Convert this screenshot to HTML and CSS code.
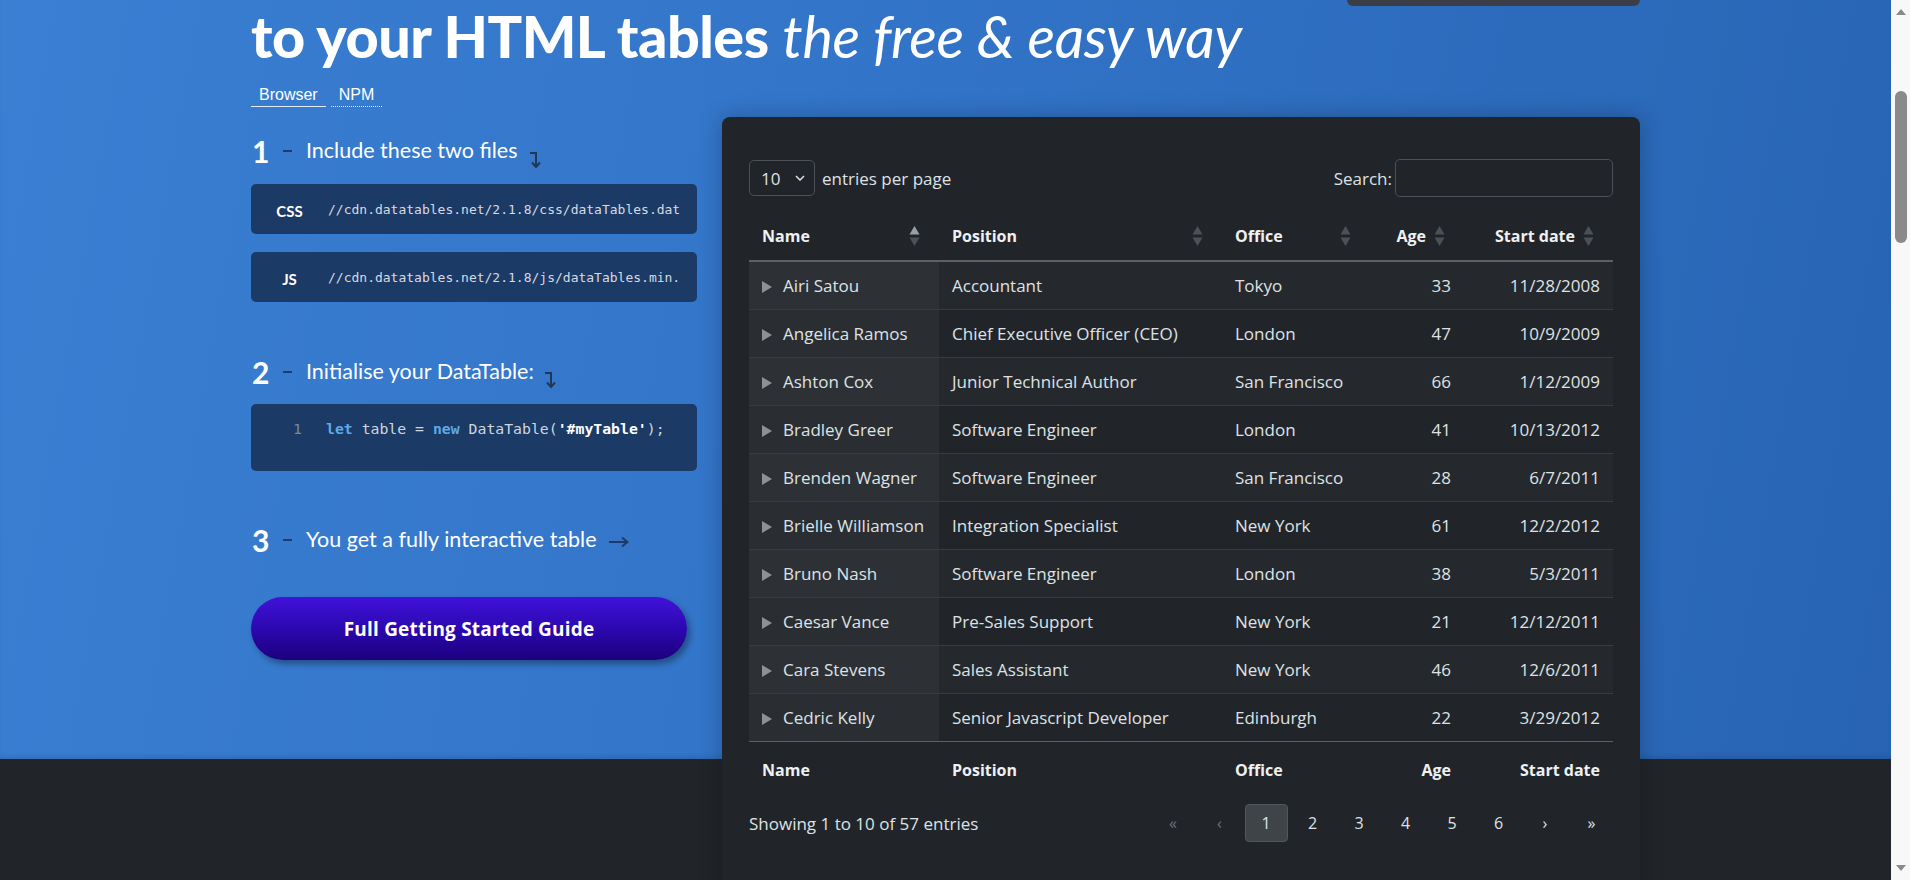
FILE: index.html
```html
<!DOCTYPE html>
<html lang="en">
<head>
<meta charset="utf-8">
<title>DataTables</title>
<link rel="stylesheet" href="styles.css">
</head>
<body>
<div class="window">
  <div class="page">
    <section class="hero">
      <div class="container">
        <div class="topbar"></div>
        <h1 class="headline"><strong>to your HTML tables</strong> <em>the free &amp; easy way</em></h1>
        <div class="tabs"><span class="tab active">Browser</span><span class="tab">NPM</span></div>
        <div class="layout">
          <div class="steps">
            <div class="step">
              <span class="step-num">1</span><span class="step-dash"></span><span class="step-text">Include these two files</span>
              <svg class="arrow-down" width="12" height="18" viewBox="0 0 12 18"><path d="M1 2H7V15" fill="none" stroke="#243752" stroke-width="2"/><path d="M3 11.5L7 16L11 11.5" fill="none" stroke="#243752" stroke-width="2"/></svg>
            </div>
            <div class="file"><span class="file-label">CSS</span><span class="file-code">//cdn.datatables.net/2.1.8/css/dataTables.dat</span></div>
            <div class="file"><span class="file-label">JS</span><span class="file-code">//cdn.datatables.net/2.1.8/js/dataTables.min.</span></div>

            <div class="step step-2">
              <span class="step-num">2</span><span class="step-dash"></span><span class="step-text">Initialise your DataTable:</span>
              <svg class="arrow-down arrow-down-2" width="12" height="18" viewBox="0 0 12 18"><path d="M1 2H7V15" fill="none" stroke="#243752" stroke-width="2"/><path d="M3 11.5L7 16L11 11.5" fill="none" stroke="#243752" stroke-width="2"/></svg>
            </div>
            <div class="code-block"><span class="ln">1</span><span class="code"><b class="kw">let</b> table = <b class="kw">new</b> DataTable(<b class="str">'#myTable'</b>);</span></div>

            <div class="step step-3">
              <span class="step-num">3</span><span class="step-dash"></span><span class="step-text">You get a fully interactive table</span>
              <svg class="arrow-right" width="21" height="12" viewBox="0 0 21 12"><path d="M1 6H19" fill="none" stroke="#1f3a64" stroke-width="2"/><path d="M14 1.5L19.5 6L14 10.5" fill="none" stroke="#1f3a64" stroke-width="2"/></svg>
            </div>
            <a class="guide-btn">Full Getting Started Guide</a>
          </div>

          <div class="card">
            <div class="controls">
              <div class="length">
                <div class="select"><span>10</span><svg width="10" height="6" viewBox="0 0 10 6"><path d="M1 1L5 5L9 1" fill="none" stroke="#dee2e6" stroke-width="1.5"/></svg></div>
                <span class="per-page">entries per page</span>
              </div>
              <div class="search"><span>Search:</span><div class="input"></div></div>
            </div>

            <table class="dt">
              <colgroup><col class="c-name"><col class="c-pos"><col class="c-off"><col class="c-age"><col class="c-date"></colgroup>
              <thead>
                <tr>
                  <th><div class="th-in"><span>Name</span><svg class="sort" width="11" height="22" viewBox="0 0 11 22"><path d="M0.5 9.5L5.5 1L10.5 9.5Z" fill="#9a9fa5"/><path d="M0.5 12.5L5.5 21L10.5 12.5Z" fill="#4c5157"/></svg></div></th>
                  <th><div class="th-in"><span>Position</span><svg class="sort" width="11" height="22" viewBox="0 0 11 22"><path d="M0.5 9.5L5.5 1L10.5 9.5Z" fill="#4c5157"/><path d="M0.5 12.5L5.5 21L10.5 12.5Z" fill="#4c5157"/></svg></div></th>
                  <th><div class="th-in"><span>Office</span><svg class="sort" width="11" height="22" viewBox="0 0 11 22"><path d="M0.5 9.5L5.5 1L10.5 9.5Z" fill="#4c5157"/><path d="M0.5 12.5L5.5 21L10.5 12.5Z" fill="#4c5157"/></svg></div></th>
                  <th class="num"><div class="th-in"><span>Age</span><svg class="sort" width="11" height="22" viewBox="0 0 11 22"><path d="M0.5 9.5L5.5 1L10.5 9.5Z" fill="#4c5157"/><path d="M0.5 12.5L5.5 21L10.5 12.5Z" fill="#4c5157"/></svg></div></th>
                  <th class="num"><div class="th-in"><span>Start date</span><svg class="sort" width="11" height="22" viewBox="0 0 11 22"><path d="M0.5 9.5L5.5 1L10.5 9.5Z" fill="#4c5157"/><path d="M0.5 12.5L5.5 21L10.5 12.5Z" fill="#4c5157"/></svg></div></th>
                </tr>
              </thead>
              <tbody>
                <tr><td class="sorted"><span class="ctrl"></span>Airi Satou</td><td>Accountant</td><td>Tokyo</td><td class="num">33</td><td class="num">11/28/2008</td></tr>
                <tr><td class="sorted"><span class="ctrl"></span>Angelica Ramos</td><td>Chief Executive Officer (CEO)</td><td>London</td><td class="num">47</td><td class="num">10/9/2009</td></tr>
                <tr><td class="sorted"><span class="ctrl"></span>Ashton Cox</td><td>Junior Technical Author</td><td>San Francisco</td><td class="num">66</td><td class="num">1/12/2009</td></tr>
                <tr><td class="sorted"><span class="ctrl"></span>Bradley Greer</td><td>Software Engineer</td><td>London</td><td class="num">41</td><td class="num">10/13/2012</td></tr>
                <tr><td class="sorted"><span class="ctrl"></span>Brenden Wagner</td><td>Software Engineer</td><td>San Francisco</td><td class="num">28</td><td class="num">6/7/2011</td></tr>
                <tr><td class="sorted"><span class="ctrl"></span>Brielle Williamson</td><td>Integration Specialist</td><td>New York</td><td class="num">61</td><td class="num">12/2/2012</td></tr>
                <tr><td class="sorted"><span class="ctrl"></span>Bruno Nash</td><td>Software Engineer</td><td>London</td><td class="num">38</td><td class="num">5/3/2011</td></tr>
                <tr><td class="sorted"><span class="ctrl"></span>Caesar Vance</td><td>Pre-Sales Support</td><td>New York</td><td class="num">21</td><td class="num">12/12/2011</td></tr>
                <tr><td class="sorted"><span class="ctrl"></span>Cara Stevens</td><td>Sales Assistant</td><td>New York</td><td class="num">46</td><td class="num">12/6/2011</td></tr>
                <tr><td class="sorted"><span class="ctrl"></span>Cedric Kelly</td><td>Senior Javascript Developer</td><td>Edinburgh</td><td class="num">22</td><td class="num">3/29/2012</td></tr>
              </tbody>
              <tfoot>
                <tr><th>Name</th><th>Position</th><th>Office</th><th class="num">Age</th><th class="num">Start date</th></tr>
              </tfoot>
            </table>

            <div class="bottom">
              <span class="info">Showing 1 to 10 of 57 entries</span>
              <div class="pager">
                <span class="pg disabled">«</span>
                <span class="pg disabled">‹</span>
                <span class="pg active">1</span>
                <span class="pg">2</span>
                <span class="pg">3</span>
                <span class="pg">4</span>
                <span class="pg">5</span>
                <span class="pg">6</span>
                <span class="pg">›</span>
                <span class="pg">»</span>
              </div>
            </div>
          </div>
        </div>
      </div>
    </section>
  </div>
  <div class="scrollbar">
    <svg class="sb-up" width="10" height="6" viewBox="0 0 10 6"><path d="M0 6L5 0L10 6Z" fill="#8a8a8a"/></svg>
    <div class="sb-thumb"></div>
    <svg class="sb-down" width="10" height="6" viewBox="0 0 10 6"><path d="M0 0L5 6L10 0Z" fill="#8a8a8a"/></svg>
  </div>
</div>
</body>
</html>
```
FILE: styles.css
```css
html, body {
  margin: 0;
  height: 880px;
  overflow: hidden;
}
body {
  font-family: Lato, "Open Sans", sans-serif;
}
.window {
  display: flex;
  height: 880px;
}
.page {
  flex: 1;
  min-width: 0;
  background: #212429;
  overflow: hidden;
}
.hero {
  height: 759px;
  color: #fff;
  background: linear-gradient(100deg, #3a7fd3 0%, #3274c8 45%, #2864b3 100%);
  box-shadow: inset 0 -5px 6px -4px rgba(0, 0, 0, 0.18);
}
.container {
  width: 1389px;
  margin: 0 auto;
}
.topbar {
  width: 293px;
  height: 6px;
  margin-left: auto;
  background: #3a3f47;
  border-radius: 0 0 8px 8px;
}
.headline {
  margin: 0;
  font-size: 57.5px;
  line-height: 60px;
  font-weight: 700;
  white-space: nowrap;
  letter-spacing: -0.3px;
}
.headline strong {
  letter-spacing: -0.5px;
}
.headline em {
  font-weight: 400;
}
.tabs {
  display: flex;
  gap: 5px;
  margin-top: 20px;
  font-family: "Liberation Sans", Arial, sans-serif;
  font-size: 16px;
  line-height: 18px;
}
.tab {
  padding: 0 8px 2px;
  border-bottom: 1px dotted rgba(255, 255, 255, 0.85);
}
.tab.active {
  border-bottom-style: solid;
}
.layout {
  display: grid;
  grid-template-columns: 446px 918px;
  column-gap: 25px;
  margin-top: 10px;
  align-items: start;
}
.steps {
  padding-top: 19px;
}
.step {
  display: flex;
  align-items: center;
  height: 30px;
}
.step-num {
  width: 30px;
  font-size: 30px;
  line-height: 30px;
  font-weight: 700;
  padding-left: 1px;
  box-sizing: border-box;
}
.step-dash {
  width: 9px;
  height: 1.5px;
  margin-left: 2px;
  margin-right: 14px;
  background: #1f3d6b;
}
.step-text {
  font-size: 21.5px;
  line-height: 30px;
  margin-top: -3px;
}
.arrow-down {
  align-self: flex-start;
  margin-top: 15px;
  margin-left: 11px;
}
.arrow-down-2 {
  margin-top: 14px;
  margin-left: 10px;
}
.arrow-right {
  margin-left: 11px;
  margin-top: 3px;
}
.file {
  display: grid;
  grid-template-columns: 77px 1fr;
  align-items: center;
  height: 50px;
  margin-top: 18px;
  background: #1c3a66;
  border-radius: 5px;
}
.file-label {
  text-align: center;
  font-weight: 700;
  font-size: 15px;
  padding-top: 4px;
}
.file-code {
  font-family: "DejaVu Sans Mono", "Liberation Mono", monospace;
  font-size: 13px;
  color: #d5dbe3;
  white-space: nowrap;
}
.step-2 {
  margin-top: 55px;
}
.code-block {
  display: flex;
  height: 67px;
  box-sizing: border-box;
  margin-top: 17px;
  padding-top: 14px;
  background: #1c3a66;
  border-radius: 5px;
  font-family: "DejaVu Sans Mono", "Liberation Mono", monospace;
  font-size: 14.8px;
  line-height: 22px;
  color: #d0d5dc;
  white-space: nowrap;
}
.ln {
  padding-left: 42px;
  width: 33px;
  color: #7f8796;
}
.kw {
  color: #5ea9e8;
}
.str {
  color: #ffffff;
}
.step-3 {
  margin-top: 54px;
}
.guide-btn {
  display: flex;
  align-items: center;
  justify-content: center;
  width: 436px;
  height: 63px;
  margin-top: 42px;
  border-radius: 32px;
  background: linear-gradient(180deg, #4112da 0%, #2c08b0 50%, #1c007e 100%);
  box-shadow: 3px 4px 6px rgba(0, 0, 0, 0.35);
  font-family: "Open Sans", Lato, sans-serif;
  font-size: 19px;
  font-weight: 700;
  letter-spacing: 0.2px;
  color: #fff;
}
.card {
  height: 800px;
  box-sizing: border-box;
  padding: 42px 27px 0;
  background: #212529;
  border-radius: 8px;
  box-shadow: 0 0 22px rgba(0, 0, 0, 0.25);
  color: #dee2e6;
  font-family: "Open Sans", Lato, sans-serif;
  font-size: 17px;
}
.controls {
  display: flex;
  align-items: center;
  justify-content: space-between;
  height: 38px;
}
.length, .search {
  display: flex;
  align-items: center;
}
.select {
  width: 66px;
  height: 36px;
  box-sizing: border-box;
  display: flex;
  align-items: center;
  justify-content: space-between;
  padding: 0 9px 0 11px;
  border: 1px solid #4b5157;
  border-radius: 5px;
}
.per-page {
  margin-left: 7px;
}
.input {
  width: 218px;
  height: 38px;
  box-sizing: border-box;
  margin-left: 3px;
  border: 1px solid #4b5157;
  border-radius: 5px;
}
.dt {
  width: 864px;
  margin-top: 15px;
  border-collapse: separate;
  border-spacing: 0;
  table-layout: fixed;
}
.c-name { width: 190px; }
.c-pos { width: 283px; }
.c-off { width: 148px; }
.c-age { width: 94px; }
.c-date { width: 149px; }
.dt th {
  font-size: 16px;
}
.dt thead th {
  height: 48px;
  padding: 0 19px 0 13px;
  text-align: left;
  font-weight: 700;
  color: #eef0f2;
  border-bottom: 2px solid #5c6166;
}
.th-in {
  display: flex;
  align-items: center;
  justify-content: space-between;
}
.num .th-in {
  justify-content: flex-end;
  gap: 8px;
}
.dt td {
  height: 47px;
  padding: 0 13px;
  border-bottom: 1px solid #383c41;
  white-space: nowrap;
}
.dt tbody tr:nth-child(odd) td {
  background: #25292d;
}
.dt tbody tr td.sorted {
  background: #2a2e32;
}
.dt tbody tr:nth-child(odd) td.sorted {
  background: #2d3135;
}
.dt tbody tr:last-child td {
  border-bottom-color: #5c6166;
}
.dt .num {
  text-align: right;
}
.ctrl {
  display: inline-block;
  width: 0;
  height: 0;
  margin-right: 11px;
  border-top: 6px solid transparent;
  border-bottom: 6px solid transparent;
  border-left: 10px solid #8d9196;
  vertical-align: -1px;
}
.dt tfoot th {
  height: 48px;
  padding: 4px 13px 0;
  text-align: left;
  font-weight: 700;
  color: #eef0f2;
}
.dt tfoot th.num {
  text-align: right;
}
.bottom {
  display: flex;
  align-items: center;
  justify-content: space-between;
  margin-top: 10px;
}
.pager {
  display: flex;
  gap: 3.5px;
  font-size: 16px;
}
.pg {
  width: 43px;
  height: 38px;
  box-sizing: border-box;
  display: flex;
  align-items: center;
  justify-content: center;
  border-radius: 4px;
}
.pg.active {
  background: #3f4449;
  border: 1px solid #52575d;
}
.pg.disabled {
  color: #6c737a;
}
.scrollbar {
  width: 19px;
  height: 880px;
  background: #f8f8f8;
  display: flex;
  flex-direction: column;
  align-items: center;
}
.sb-up {
  margin-top: 9px;
}
.sb-thumb {
  width: 12px;
  height: 152px;
  margin-top: 76px;
  border-radius: 6px;
  background: #8a8a8a;
}
.sb-down {
  margin-top: auto;
  margin-bottom: 9px;
}
```
